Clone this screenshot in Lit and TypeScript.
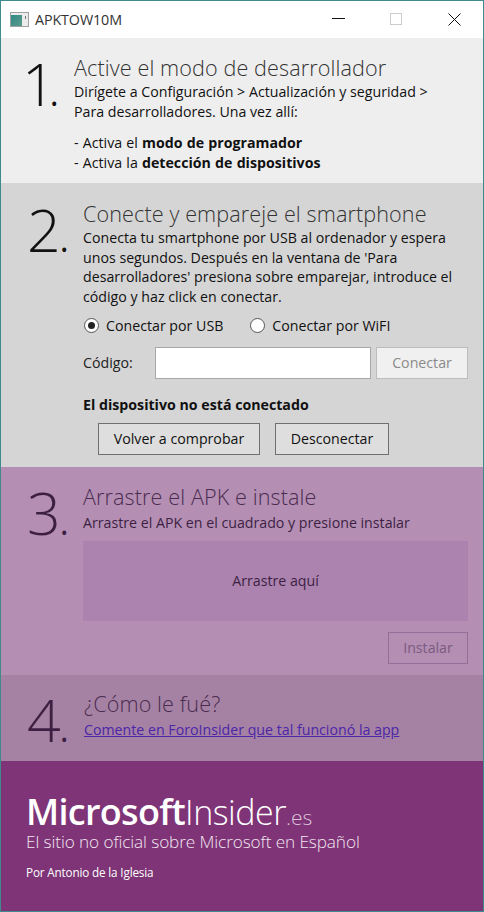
import { LitElement, html, css } from "lit";
import { customElement } from "lit/decorators.js";

@customElement("app-root")
export class AppRoot extends LitElement {
  static styles = css`
    :host { display: block; width: 484px; height: 912px; font-family: "Open Sans", sans-serif; color: #111; }
    * { box-sizing: border-box; }
    .win { width: 484px; height: 912px; border: 1px solid #3f8a8c; display: flex; flex-direction: column; overflow: hidden; background: #fff; }
    .title { height: 37px; flex: none; background: #fff; display: flex; align-items: center; padding-left: 9px; }
    .title .app { font-size: 14.3px; color: #333; margin-left: 6px; letter-spacing: -0.1px; flex: 1; }
    .wbtn { display: flex; align-items: center; justify-content: center; width: 58px; height: 37px; }
    .sec { display: flex; flex: none; padding-left: 26px; }
    .num { font-weight: 300; font-size: 59px; line-height: 56px; flex: none; letter-spacing: -2px; }
    .dot { font-size: 34px; font-weight: 400; margin-left: 1px; letter-spacing: 0; }
    .dig1 { margin-left: -5px; letter-spacing: -6px; }
    .dot1 { margin-left: 0; }
    .h { font-weight: 300; font-size: 21.6px; line-height: 26px; color: #333; letter-spacing: 0.1px; }
    .p { font-size: 14.2px; line-height: 19.7px; margin: 1px 0 0; }
    b { font-weight: 700; }
    .s1 { height: 145px; background: #eeeeee; padding-top: 17px; }
    .s1 .num { width: 47px; }
    .s1 .p2 { margin-top: 12px; word-spacing: 0.5px; }
    .s2 { height: 284px; background: #d5d5d5; padding-top: 18px; }
    .s2 .num, .s3 .num, .s4 .num { width: 56px; }
    .body { flex: 1; padding-right: 15px; }
    .radios { display: flex; margin-top: 9px; padding-left: 1px; font-size: 14.2px; line-height: 20px; }
    .radio { display: flex; align-items: center; gap: 7px; }
    .radio + .radio { margin-left: 27px; }
    .rc { width: 15px; height: 15px; border-radius: 50%; border: 1px solid #555; background: #fff; display: flex; align-items: center; justify-content: center; }
    .rc i { width: 7px; height: 7px; border-radius: 50%; background: #222; }
    .code { display: flex; align-items: center; margin-top: 11px; font-size: 14.2px; }
    .code label { width: 72px; color: #222; }
    .input { width: 216px; height: 32px; background: #fff; border: 1px solid #a8a8a8; }
    .btn { display: flex; align-items: center; justify-content: center; height: 32px; border: 1px solid #707070; font-size: 14.2px; background: #dedede; }
    .btn.dis { margin-left: 5px; width: 92px; background: #f0f0f0; border-color: #bdbdbd; color: #8a8a8a; }
    .status { font-weight: 700; font-size: 14.2px; line-height: 20px; margin-top: 16px; }
    .acts { display: flex; gap: 15px; margin-top: 8px; padding-left: 15px; }
    .acts .a { width: 162px; }
    .acts .b { width: 114px; }
    .s3 { height: 208px; background: #b48fb3; padding-top: 17px; color: #3d1f44; }
    .s3 .h, .s4 .h { color: #4a2c50; }
    .s3 .p { margin-top: 3px; }
    .drop { height: 80px; margin-top: 8px; background: #ac83ae; display: flex; align-items: center; justify-content: center; font-size: 14.2px; color: #3d1f44; }
    .inst { display: flex; justify-content: flex-end; margin-top: 11px; }
    .inst .btn { width: 80px; background: transparent; border-color: #93709a; color: #7a5a80; }
    .s4 { height: 86px; background: #a581a3; padding-top: 16px; color: #3d1f44; }
    .s4 .body { padding-left: 1px; }
    a { color: #4b26a8; font-size: 14.2px; line-height: 20px; text-decoration: underline; display: block; margin-top: 3px; }
    .foot { flex: 1; background: #7e3477; color: #fff; padding: 37px 0 0 25px; }
    .logo { font-size: 36px; line-height: 28px; letter-spacing: -0.7px; font-weight: 600; white-space: nowrap; }
    .logo span { font-weight: 300; font-size: 34px; letter-spacing: -0.5px; }
    .logo small { font-size: 21px; font-weight: 300; color: #ddc3da; letter-spacing: 0; }
    .tag { font-size: 17.2px; font-weight: 300; line-height: 22px; color: #f2e6f0; letter-spacing: -0.1px; }
    .by { font-size: 11.7px; font-weight: 400; margin-top: 11px; line-height: 16px; letter-spacing: -0.15px; }
  `;

  render() {
    return html`<div class="win">
      <div class="title">
        <svg width="19" height="15" viewBox="0 0 19 15">
          <defs><linearGradient id="g" x1="0" y1="0" x2="1" y2="1"><stop offset="0" stop-color="#2f8a86"/><stop offset="1" stop-color="#5c9a8c"/></linearGradient></defs>
          <rect x=".5" y=".5" width="18" height="14" fill="#ececec" stroke="#a0a0a0"/>
          <rect x="1" y="3" width="11" height="11" fill="url(#g)"/>
          <rect x="15" y="4" width="1" height="3" fill="#777"/>
        </svg>
        <span class="app">APKTOW10M</span>
        <span class="wbtn"><svg width="13" height="13" viewBox="0 0 13 13"><path d="M0 5.5h13" stroke="#111" fill="none"/></svg></span>
        <span class="wbtn"><svg width="13" height="13" viewBox="0 0 13 13"><rect x=".5" y=".5" width="11" height="11" stroke="#ccc" fill="none"/></svg></span>
        <span class="wbtn"><svg width="13" height="13" viewBox="0 0 13 13"><path d="M.5.5l12 12M12.5.5l-12 12" stroke="#111" fill="none"/></svg></span>
      </div>
      <section class="sec s1">
        <div class="num"><span class="dig1">1</span><span class="dot dot1">.</span></div>
        <div class="body">
          <div class="h">Active el modo de desarrollador</div>
          <p class="p">Dirígete a Configuración &gt; Actualización y seguridad &gt;<br>Para desarrolladores. Una vez allí:</p>
          <p class="p p2">- Activa el <b>modo de programador</b><br>- Activa la <b>detección de dispositivos</b></p>
        </div>
      </section>
      <section class="sec s2">
        <div class="num">2<span class="dot">.</span></div>
        <div class="body">
          <div class="h">Conecte y empareje el smartphone</div>
          <p class="p">Conecta tu smartphone por USB al ordenador y espera<br>unos segundos. Después en la ventana de 'Para<br>desarrolladores' presiona sobre emparejar, introduce el<br>código y haz click en conectar.</p>
          <div class="radios">
            <span class="radio"><span class="rc"><i></i></span>Conectar por USB</span>
            <span class="radio"><span class="rc"></span>Conectar por WiFI</span>
          </div>
          <div class="code">
            <label>Código:</label>
            <div class="input"></div>
            <div class="btn dis">Conectar</div>
          </div>
          <div class="status">El dispositivo no está conectado</div>
          <div class="acts">
            <div class="btn a">Volver a comprobar</div>
            <div class="btn b">Desconectar</div>
          </div>
        </div>
      </section>
      <section class="sec s3">
        <div class="num">3<span class="dot">.</span></div>
        <div class="body">
          <div class="h">Arrastre el APK e instale</div>
          <p class="p">Arrastre el APK en el cuadrado y presione instalar</p>
          <div class="drop">Arrastre aquí</div>
          <div class="inst"><div class="btn">Instalar</div></div>
        </div>
      </section>
      <section class="sec s4">
        <div class="num">4<span class="dot">.</span></div>
        <div class="body">
          <div class="h">¿Cómo le fué?</div>
          <a href="#">Comente en ForoInsider que tal funcionó la app</a>
        </div>
      </section>
      <footer class="foot">
        <div class="logo">Microsoft<span>Insider</span><small>.es</small></div>
        <div class="tag">El sitio no oficial sobre Microsoft en Español</div>
        <div class="by">Por Antonio de la Iglesia</div>
      </footer>
    </div>`;
  }
}
